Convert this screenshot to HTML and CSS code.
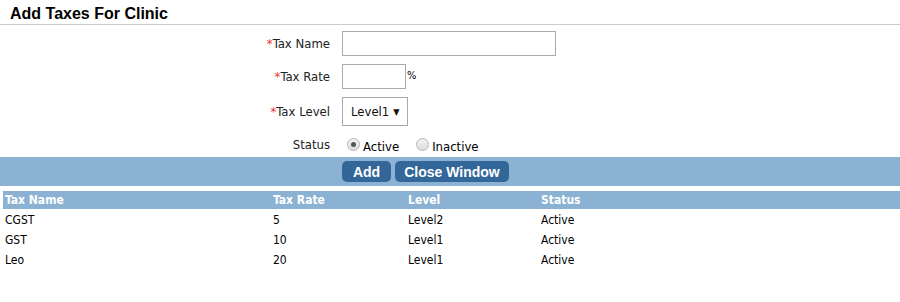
FILE: index.html
```html
<!DOCTYPE html>
<html lang="en">
<head>
    <meta charset="UTF-8">
    <title>Add Taxes For Clinic</title>
    <link rel="stylesheet" href="styles.css">
</head>
<body>

<h2 class="title">Add Taxes For Clinic</h2>

<!-- Tax form -->
<div class="tax-form">
    <label class="lbl"><span class="req">*</span>Tax Name</label>
    <div class="fld"><input type="text" class="inp inp-name"></div>

    <label class="lbl"><span class="req">*</span>Tax Rate</label>
    <div class="fld"><input type="text" class="inp inp-rate"><span class="pct">%</span></div>

    <label class="lbl"><span class="req">*</span>Tax Level</label>
    <div class="fld">
        <div class="sel">Level1 <span class="arrow">&#9660;</span></div>
    </div>

    <label class="lbl lbl-status">Status</label>
    <div class="fld radios">
        <span class="radio"><span class="dot on"></span>Active</span>
        <span class="radio"><span class="dot"></span>Inactive</span>
    </div>
</div>

<div class="btn-bar">
    <button class="btn btn-add">Add</button>
    <button class="btn btn-close">Close Window</button>
</div>

<!-- Tax list -->
<table class="tax-table">
    <tr><th class="c1">Tax Name</th><th class="c2">Tax Rate</th><th class="c3">Level</th><th>Status</th></tr>
    <tr><td>CGST</td><td>5</td><td>Level2</td><td>Active</td></tr>
    <tr><td>GST</td><td>10</td><td>Level1</td><td>Active</td></tr>
    <tr><td>Leo</td><td>20</td><td>Level1</td><td>Active</td></tr>
</table>

</body>
</html>
```

FILE: styles.css
```css
* { margin: 0; padding: 0; box-sizing: border-box; }
body { background: #fff; color: #000; font-family: "DejaVu Sans Condensed", Tahoma, sans-serif; font-size: 13px; }
.title { font-family: "Liberation Sans", Arial, sans-serif; font-size: 16px; font-weight: bold; padding: 6px 0 2px 10px; line-height: 16px; border-bottom: 1px solid #ccc; height: 25px; }

.tax-form { display: grid; grid-template-columns: 330px auto; column-gap: 12px; row-gap: 8px; padding-top: 6px; align-items: center; }
.lbl { text-align: right; color: #222; }
.req { color: #e33; }
.fld { display: flex; align-items: center; }
.inp { height: 25px; border: 1px solid #a9a9a9; }
.inp-name { width: 214px; }
.inp-rate { width: 64px; }
.pct { font-size: 11px; margin-left: 1px; margin-top: -2px; }
.sel { width: 66px; height: 29px; border: 1px solid #a9a9a9; display: flex; align-items: center; padding-left: 8px; gap: 4px; color: #111; }
.arrow { font-size: 9px; }
.lbl-status { align-self: start; margin-top: 3px; }
.radios { gap: 17px; margin-left: 5px; }
.radio { display: flex; align-items: center; gap: 3px; margin-top: 5px; }
.dot { width: 13px; height: 13px; border-radius: 50%; border: 1px solid #b5b5b5; background: linear-gradient(#f3f3f3, #dcdcdc); display: inline-flex; align-items: center; justify-content: center; margin-top: -4px; }
.dot.on::after { content: ""; width: 5px; height: 5px; border-radius: 50%; background: #555; }

.btn-bar { background: #8cb2d3; height: 29px; margin-top: 3px; padding-left: 342px; display: flex; align-items: center; gap: 4px; }
.btn { background: #336699; color: #fff; font-family: "Liberation Sans", Arial, sans-serif; font-weight: bold; font-size: 14px; border: none; border-radius: 5px; height: 21px; padding: 0; }
.btn-add { width: 49px; }
.btn-close { width: 114px; }

.tax-table { margin: 5px 0 0 3px; width: 897px; border-collapse: collapse; font-size: 12px; }
.tax-table th { background: #8cb2d3; color: #fff; text-align: left; font-weight: bold; height: 18px; padding: 0 2px; font-family: "Liberation Sans Narrow", "DejaVu Sans Condensed", sans-serif; }
.tax-table td { height: 20px; padding: 0 2px 2px; vertical-align: bottom; }
.tax-table .c1 { width: 268px; }
.tax-table .c2 { width: 135px; }
.tax-table .c3 { width: 133px; }
```
